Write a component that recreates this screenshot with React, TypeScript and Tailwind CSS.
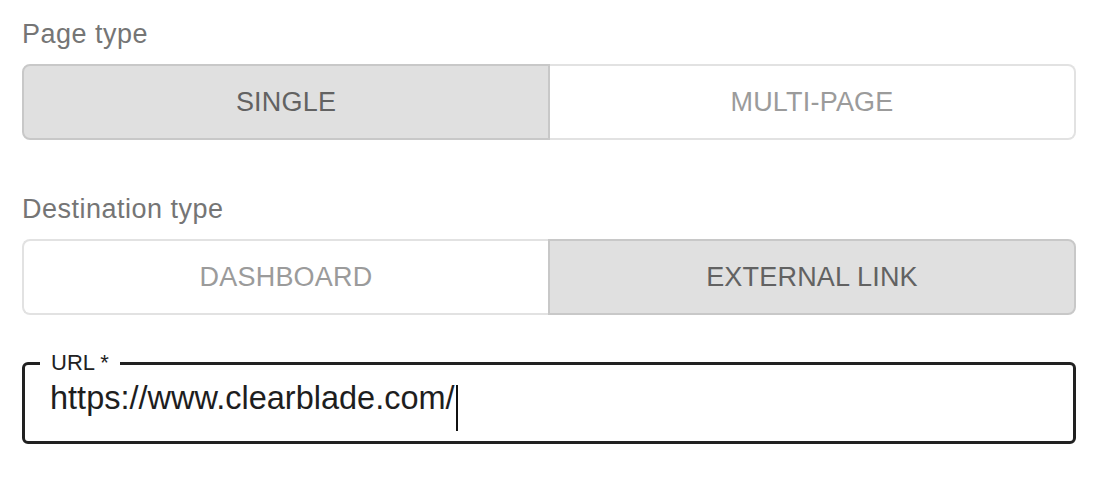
import { useState } from "react"

type Option = { value: string; label: string }

const font = { fontFamily: '"Liberation Sans", Arial, sans-serif' }

const ToggleGroup = ({ options, value, onChange }: { options: Option[]; value: string; onChange: (v: string) => void }) => {
    return (
        <div className="flex h-[76px] w-full">
            {options.map((opt, i) => {
                const selected = opt.value === value
                const first = i === 0
                let cls = "flex-1 flex items-center justify-center text-[27px] tracking-[0.2px] uppercase border-2 "
                cls += first ? "rounded-l-[8px] " : "rounded-r-[8px] "
                if (selected) {
                    cls += "bg-[#e0e0e0] border-[#c8c8c8] text-[#626262]"
                } else {
                    cls += "bg-white border-[#e2e2e2] text-[#9b9b9b] "
                    cls += first ? "border-r-0" : "border-l-0"
                }
                return (
                    <button key={opt.value} className={cls} onClick={() => onChange(opt.value)}>
                        {opt.label}
                    </button>
                )
            })}
        </div>
    )
}

const App = () => {
    const [pageType, setPageType] = useState("single")
    const [destType, setDestType] = useState("external")

    return (
        <div className="w-[1100px] h-[480px] bg-white pl-[22px] pr-[24px] pt-[19px]" style={font}>
            {/* page type */}
            <div className="text-[27px] leading-[31px] text-[#757575] tracking-[0.5px]">Page type</div>
            <div className="mt-[14px]">
                <ToggleGroup
                    options={[{ value: "single", label: "Single" }, { value: "multi", label: "Multi-page" }]}
                    value={pageType}
                    onChange={setPageType}
                />
            </div>

            {/* destination type */}
            <div className="mt-[54px] text-[27px] leading-[31px] text-[#757575] tracking-[0.5px]">Destination type</div>
            <div className="mt-[14px]">
                <ToggleGroup
                    options={[{ value: "dashboard", label: "Dashboard" }, { value: "external", label: "External link" }]}
                    value={destType}
                    onChange={setDestType}
                />
            </div>

            {/* url field */}
            <fieldset className="mt-[37px] border-[3px] border-[#212121] rounded-[6px] px-[15px]">
                <legend className="px-[11px] text-[22px] leading-[22px] text-[#222]">URL *</legend>
                <div className="flex items-start h-[61px] mt-[6px] pl-[10px] text-[32.5px] leading-[36px] text-[#1e1e1e]">
                    <span>https://www.clearblade.com/</span>
                    <span className="inline-block w-[2px] h-[46px] mt-[5px] bg-[#111] ml-[1px]" />
                </div>
            </fieldset>
        </div>
    )
}

export default App
